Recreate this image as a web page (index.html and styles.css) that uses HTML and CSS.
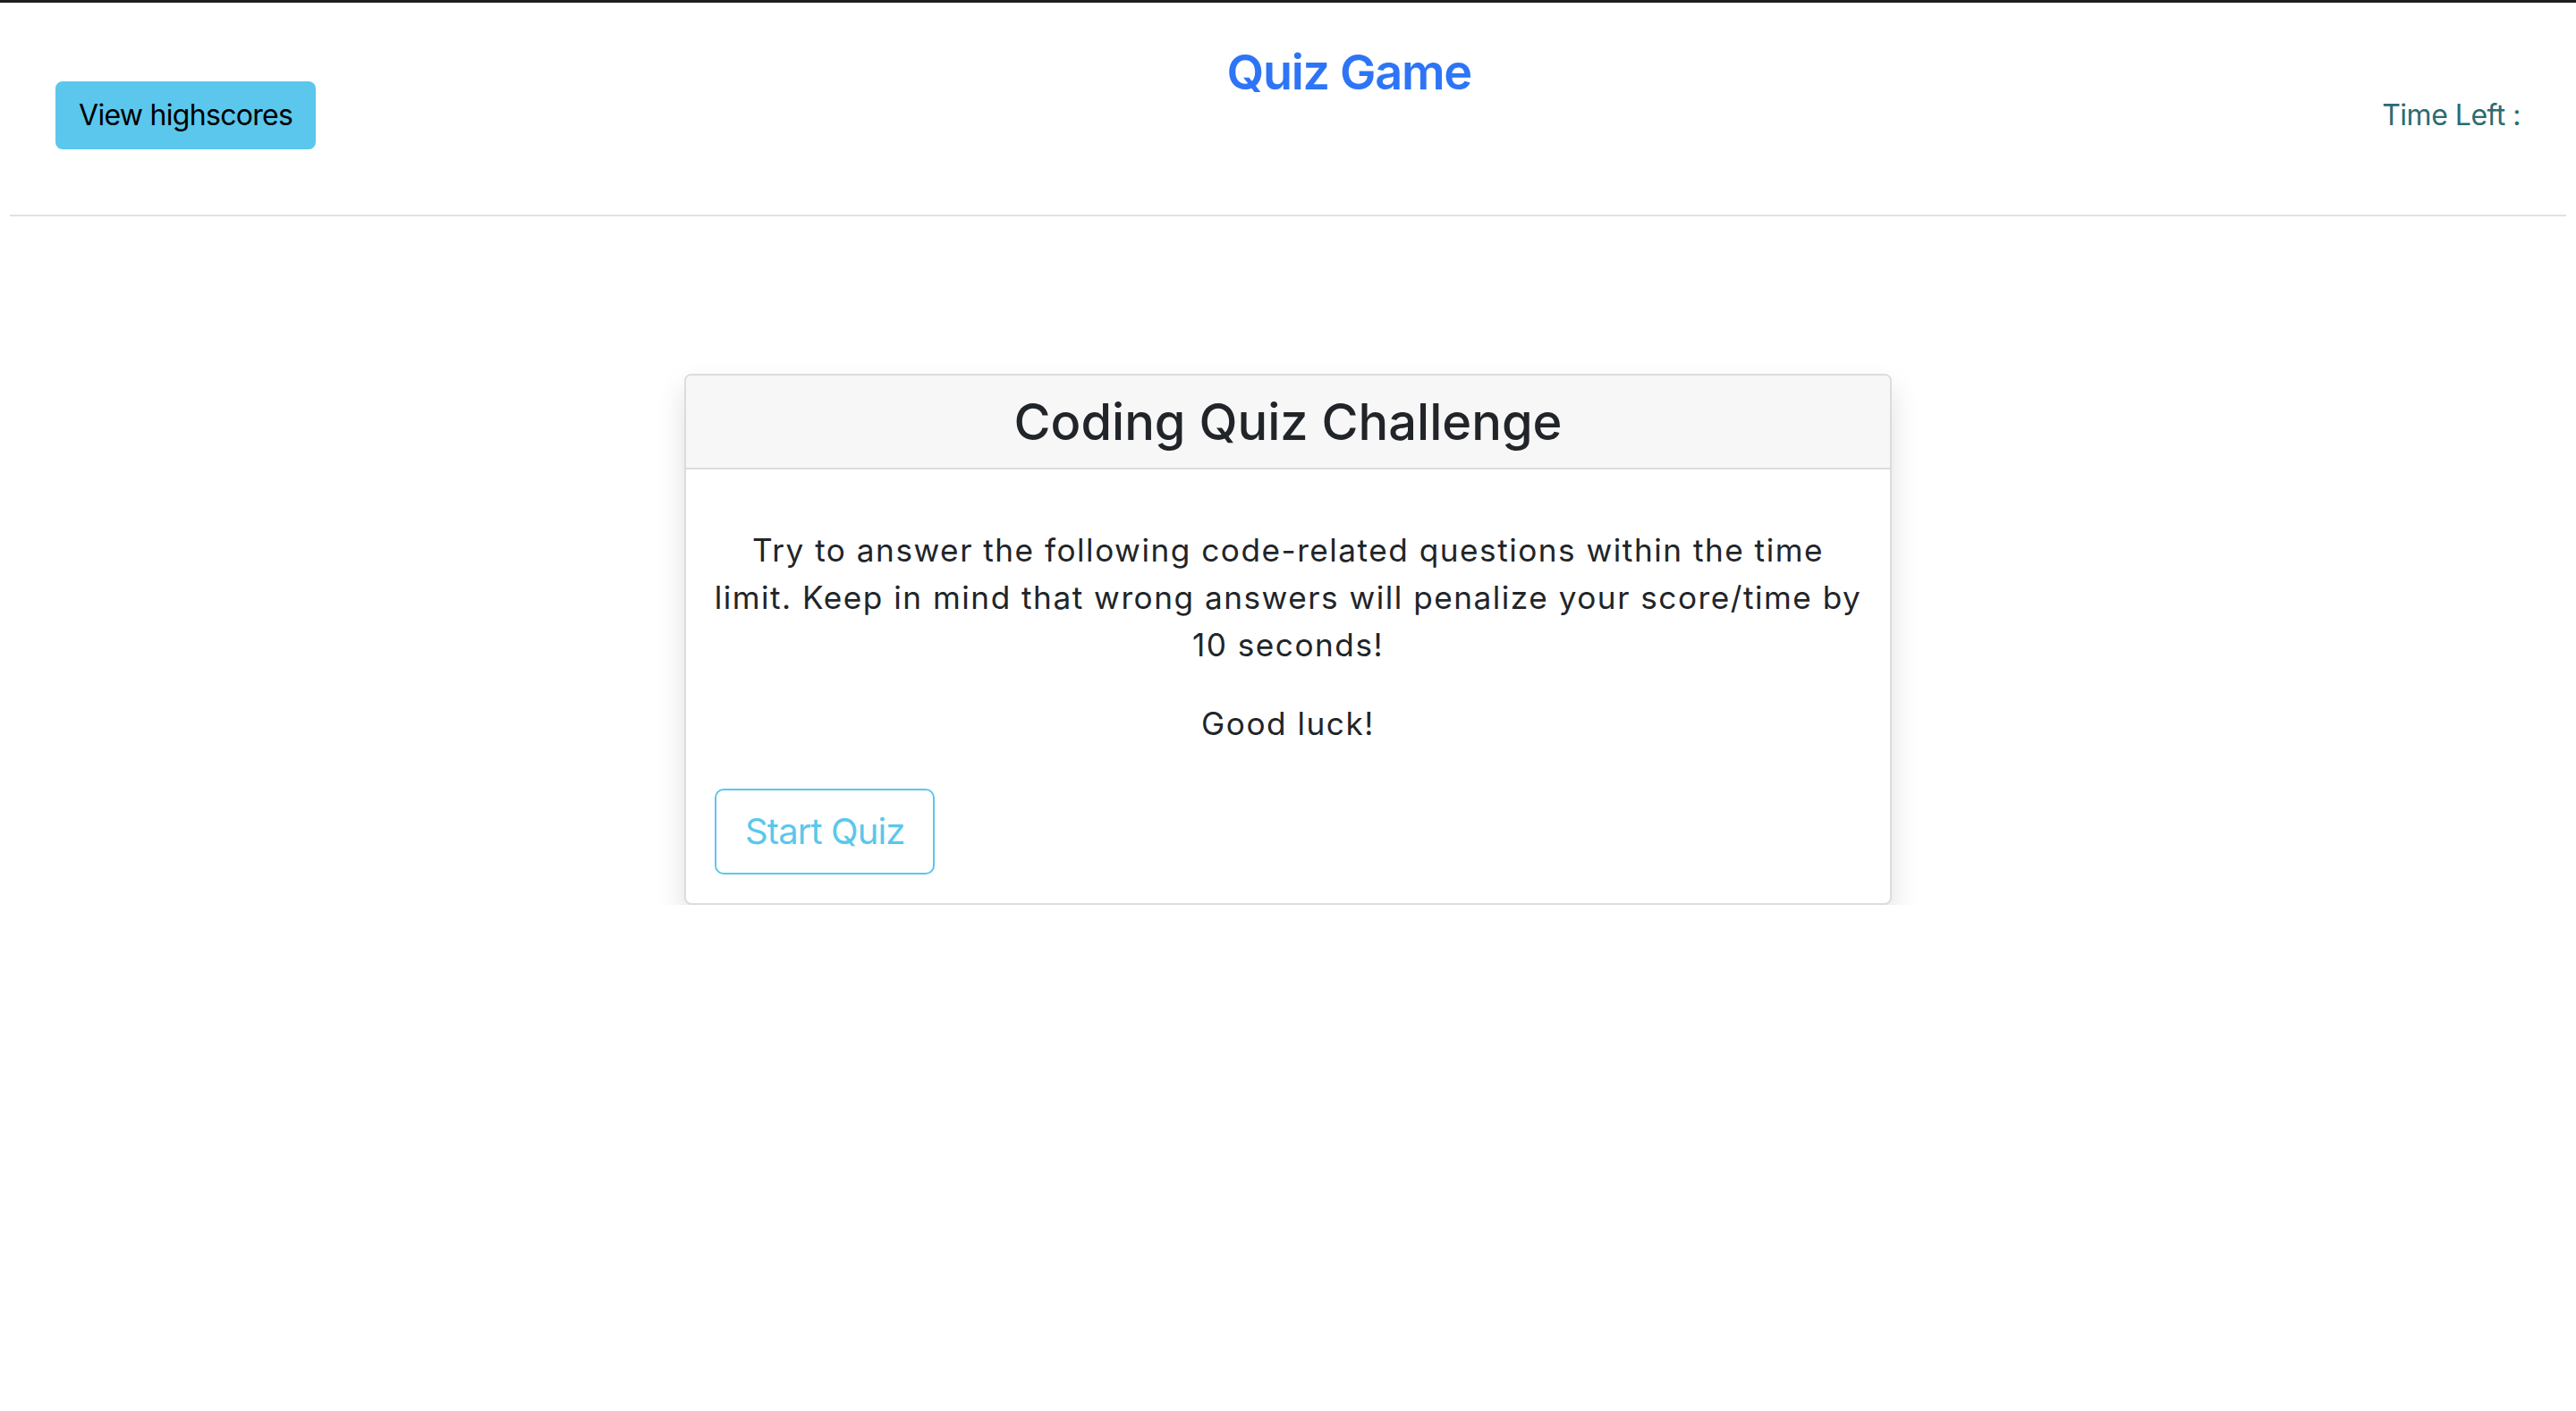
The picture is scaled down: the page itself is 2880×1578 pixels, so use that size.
FILE: index.html
```html
<!DOCTYPE html>
<html lang="en">
<head>
<meta charset="utf-8">
<title>Quiz Game</title>
<link rel="stylesheet" href="styles.css">
</head>
<body>
<div class="topbar"></div>
<header class="header">
  <button class="btn btn-info" type="button">View highscores</button>
  <h1 class="brand">Quiz Game</h1>
  <div class="timer">Time Left :</div>
</header>
<hr class="divider">
<main class="main">
  <section class="card">
    <div class="card-header">
      <h3 class="card-title">Coding Quiz Challenge</h3>
    </div>
    <div class="card-body">
      <p class="intro">Try to answer the following code-related questions within the time limit. Keep in mind that wrong answers will penalize your score/time by 10 seconds!</p>
      <p class="luck">Good luck!</p>
      <button class="btn btn-outline-info btn-lg" type="button">Start Quiz</button>
    </div>
  </section>
</main>
</body>
</html>
```

FILE: styles.css
```css
* { box-sizing: border-box; }

html, body {
  margin: 0;
  padding: 0;
  background: #ffffff;
}

body {
  font-family: Inter, "Liberation Sans", sans-serif;
  color: #212529;
}

.topbar {
  height: 3px;
  background: #1e1e1e;
}

.header {
  display: flex;
  justify-content: space-between;
  align-items: center;
  height: 205px;
  padding: 46px 62px 0;
}

.brand {
  align-self: flex-start;
  margin: 0;
  font-size: 54px;
  line-height: 1.2;
  font-weight: 600;
  letter-spacing: -1.3px;
  color: #2d75f6;
}

.timer {
  font-size: 32px;
  line-height: 1.5;
  letter-spacing: -0.5px;
  color: #2b6b72;
}

.btn {
  font-family: Inter, "Liberation Sans", sans-serif;
  display: inline-block;
  font-size: 32px;
  line-height: 1.5;
  padding: 12px 24px;
  border: 2px solid transparent;
  border-radius: 8px;
  cursor: pointer;
}

.btn-info {
  background: #5bc7ec;
  border-color: #5bc7ec;
  color: #000000;
  letter-spacing: -0.7px;
}

.btn-outline-info {
  background: #ffffff;
  border-color: #5bc7ec;
  color: #5bc7ec;
}

.btn-lg {
  font-size: 40px;
  padding: 16px 32px;
  border-radius: 10px;
  letter-spacing: -0.9px;
}

.divider {
  margin: 32px 11px 0;
  border: 0;
  border-top: 2px solid #dfe2e6;
  height: 0;
}

.main {
  padding-top: 176px;
}

.card {
  width: 1350px;
  margin: 0 auto;
  border: 2px solid #dcdcdc;
  border-radius: 8px;
  background: #ffffff;
  box-shadow: 0 16px 32px rgba(0, 0, 0, 0.13);
  overflow: hidden;
}

.card-header {
  background: #f7f7f7;
  border-bottom: 2px solid #dcdcdc;
  padding: 19px 32px 17px;
  text-align: center;
}

.card-title {
  margin: 0;
  font-size: 56px;
  line-height: 1.2;
  font-weight: 500;
  color: #212529;
}

.card-body {
  padding: 64px 32px 32px;
}

.intro,
.luck {
  margin: 0 -3px 35px;
  font-size: 35.2px;
  line-height: 1.5;
  text-align: center;
  letter-spacing: 1.5px;
}

.luck {
  margin-bottom: 47px;
}
```
